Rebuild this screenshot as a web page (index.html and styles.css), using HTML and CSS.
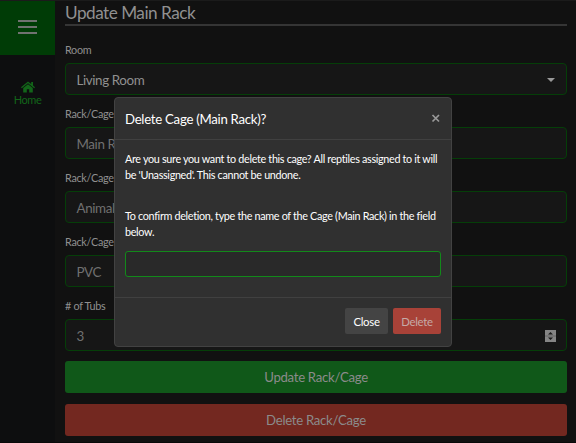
FILE: index.html
```html
<!DOCTYPE html>
<html lang="en">
<head>
<meta charset="utf-8">
<title>Update Main Rack</title>
<link rel="stylesheet" href="styles.css">
</head>
<body>
<div class="app">
  <nav class="sidebar">
    <div class="menu"><span></span><span></span><span></span></div>
    <div class="home">
      <svg width="14" height="12" viewBox="0 0 14 12"><path d="M7 .5 0 6.2l.8 1L7 2.2l6.200 5 .8-1-2-1.700V1h-1.800v2z"/><path d="M7 3.200 2.200 7.100V11.500H5.800V8.200H8.200v3.300h3.600V7.100z"/></svg>
      <span>Home</span>
    </div>
  </nav>
  <main class="content">
    <h1>Update Main Rack</h1>
    <label>Room</label>
    <div class="field">Living Room<i class="caret"></i></div>
    <label>Rack/Cage</label>
    <div class="field dim">Main Rack</div>
    <label>Rack/Cage</label>
    <div class="field dim">Animal</div>
    <label>Rack/Cage</label>
    <div class="field dim">PVC</div>
    <label># of Tubs</label>
    <div class="field dim">3
      <svg class="spin" width="11" height="12" viewBox="0 0 11 12"><rect width="11" height="12" fill="#858585"/><path d="M0 6h11" stroke="#666"/><path d="M5.500 2 8 4.500H3zM5.500 10 8 7.500H3z" fill="#1b1b1b"/></svg>
    </div>
    <div class="action update">Update Rack/Cage</div>
    <div class="action remove">Delete Rack/Cage</div>
  </main>
</div>
<section class="modal">
  <header><h2>Delete Cage (Main Rack)?</h2>
    <svg width="10" height="10" viewBox="0 0 10 10"><path d="M1.500 1l6.500 6.500M8 1 1.500 7.500" stroke="#999" stroke-width="1.700"/></svg>
  </header>
  <div class="body">
    <p class="warn">Are you sure you want to delete this cage? All reptiles assigned to it will<br>be 'Unassigned'. This cannot be undone.</p>
    <p class="ask">To confirm deletion, type the name of the Cage (Main Rack) in the field<br>below.</p>
    <div class="confirm"></div>
  </div>
  <footer><span class="btn">Close</span><span class="btn danger">Delete</span></footer>
</section>
</body>
</html>
```
FILE: styles.css
```css
* { box-sizing: border-box; }
body { margin: 0; background: #111; font-family: Lato, sans-serif; color: #909090; overflow: hidden; }
h1, h2, p { margin: 0; font-weight: 400; }
.app { display: flex; height: 443px; border-top: 1px solid #1b1b1b; border-bottom: 1px solid #090909; }
.sidebar { width: 55px; background: #0d0e0f; }
.menu { height: 54px; padding-bottom: 2px; background: #003c06; display: flex; flex-direction: column; align-items: center; justify-content: center; gap: 4px; }
.menu span { width: 19px; height: 2px; background: #707270; }
.home { margin-top: 26px; display: flex; flex-direction: column; align-items: center; color: #126519; font-size: 11px; letter-spacing: -.4px; line-height: 13px; }
.home svg { fill: #126519; }
.content { flex: 1; padding: 0 9px 0 10px; }
h1 { height: 25px; border-bottom: 2px solid #353535; font-size: 17.200px; letter-spacing: -.5px; line-height: 23px; }
label { display: block; height: 32px; padding-top: 9px; font-size: 10.800px; letter-spacing: -.3px; line-height: 19px; white-space: nowrap; }
h1 + label { height: 37px; padding-top: 14px; }
.field { height: 32px; border: 1px solid #053e08; border-radius: 4px; background: #161616; padding: 1px 11px 0 10.500px; font-size: 13.400px; letter-spacing: -.4px; display: flex; align-items: center; justify-content: space-between; }
.dim { color: #707070; }
.caret { border: 4px solid transparent; border-top-color: #999; border-bottom: 0; }
.spin { margin-right: -1px; }
.action { height: 32px; margin-top: 10px; border-radius: 3px; text-align: center; font-size: 13.200px; letter-spacing: -.3px; line-height: 33px; color: #8b8b8b; }
.update { background: #105819; }
.remove { margin-top: 11px; background: #732820; }
.modal { position: absolute; left: 114px; top: 97px; width: 338px; height: 250px; background: #303030; border: 1px solid #424242; border-radius: 4px; color: #fff; display: flex; flex-direction: column; }
.modal header { height: 42px; border-bottom: 1px solid #404040; padding: 0 10px; display: flex; align-items: center; justify-content: space-between; }
h2 { font-size: 13.200px; letter-spacing: -.27px; }
.body { flex: 1; padding: 11px 10px 0; font-size: 10.800px; letter-spacing: -.32px; line-height: 16px; white-space: nowrap; }
.ask { margin-top: 25px; }
.confirm { height: 26px; margin-top: 11px; border: 1px solid #12891a; border-radius: 3px; background: #292929; }
.modal footer { height: 49px; border-top: 1px solid #404040; padding: 10px 10px 0; display: flex; justify-content: flex-end; gap: 5px; }
.btn { width: 43px; height: 26px; border-radius: 2px; background: #444; font-size: 11.400px; letter-spacing: -.3px; line-height: 27px; text-align: center; }
.danger { width: 48px; background: #a84238; color: #c5aaa7; }
```
